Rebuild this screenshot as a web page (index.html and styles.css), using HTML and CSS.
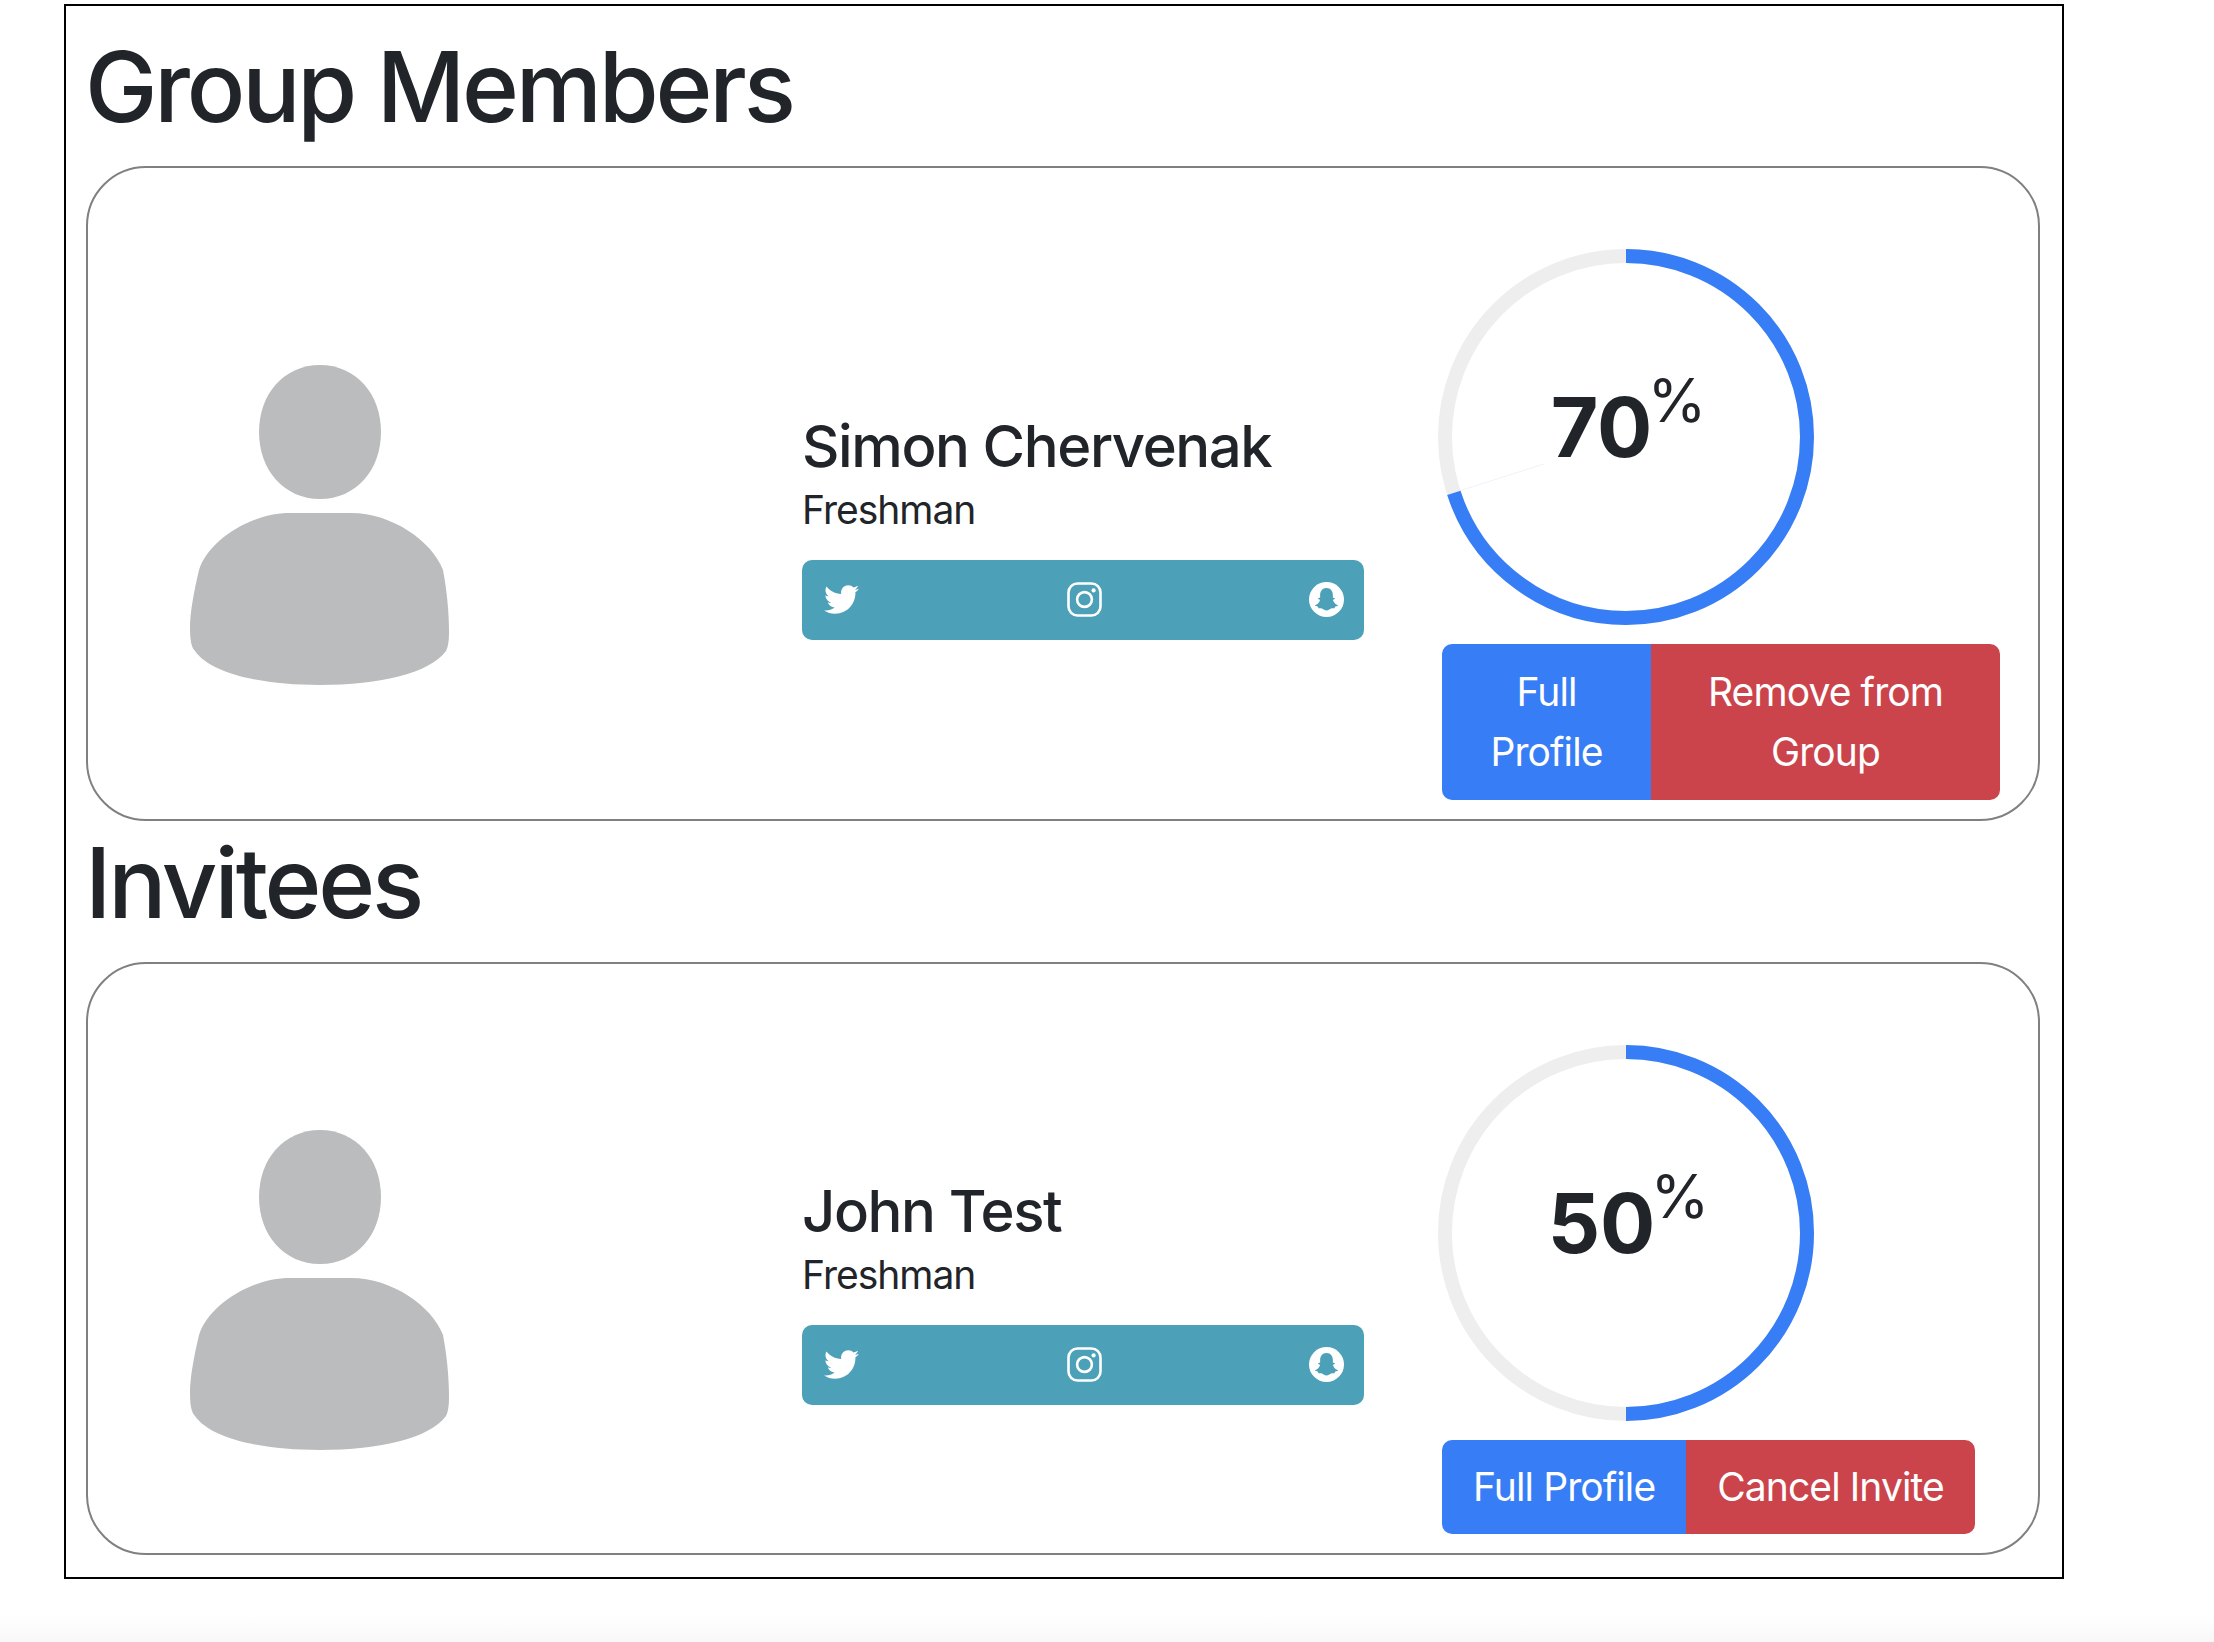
FILE: index.html
```html
<!DOCTYPE html>
<html>
<head>
    <title>Group</title>
    <link rel="stylesheet" href="styles.css">
</head>
<body>
    <svg class="icon-defs" width="0" height="0">
        <symbol id="avatar" viewBox="0 0 320 340">
            <path d="M160 14c36 0 61 29 61 67s-25 67-61 67-61-29-61-67 25-67 61-67z"/>
            <path d="M130 162H191C232 162 272 190 283 219C287 240 289 262 289 282C289 290 288 296 286 300C270 322 220 334 160 334C100 334 50 322 35 300C31 296 30 288 30 276C30 262 34 240 39 219C48 190 90 162 130 162Z"/>
        </symbol>
        <symbol id="twitter" viewBox="0 0 512 512">
            <path d="M459.37 151.716c.325 4.548.325 9.097.325 13.645 0 138.72-105.583 298.558-298.558 298.558-59.452 0-114.68-17.219-161.137-47.106 8.447.974 16.568 1.299 25.34 1.299 49.055 0 94.213-16.568 130.274-44.832-46.132-.975-84.792-31.188-98.112-72.772 6.498.974 12.995 1.624 19.818 1.624 9.421 0 18.843-1.3 27.614-3.573-48.081-9.747-84.143-51.98-84.143-102.985v-1.299c13.969 7.797 30.214 12.67 47.431 13.319-28.264-18.843-46.781-51.005-46.781-87.391 0-19.492 5.197-37.36 14.294-52.954 51.655 63.675 129.3 105.258 216.365 109.807-1.624-7.797-2.599-15.918-2.599-24.04 0-57.828 46.782-104.934 104.934-104.934 30.213 0 57.502 12.67 76.67 33.137 23.715-4.548 46.456-13.32 66.599-25.34-7.798 24.366-24.366 44.833-46.132 57.827 21.117-2.273 41.584-8.122 60.426-16.243-14.292 20.791-32.161 39.308-52.628 54.253z"/>
        </symbol>
        <symbol id="instagram" viewBox="0 0 35 35">
            <rect x="1.5" y="1.5" width="32" height="32" rx="9" fill="none" stroke="#fff" stroke-width="2.6"/>
            <circle cx="17.5" cy="17.5" r="7.4" fill="none" stroke="#fff" stroke-width="2.6"/>
            <circle cx="26.6" cy="8.4" r="2.1" fill="#fff"/>
        </symbol>
        <symbol id="snapchat" viewBox="0 0 24 24">
            <circle cx="12" cy="12" r="12" fill="#fff"/>
            <path fill="#4ca0b7" transform="translate(12 12.4) scale(1.18) translate(-12 -12)" d="M12 5c-2.5 0-3.7 2-3.7 4.1v1.5c-.5.1-1 0-1.2.3-.1.4.9.7 1.1 1 .1.5-1 2.3-2.5 2.9-.4.2-.4.5 0 .7.5.2 1.1.2 1.4.5.2.3.1.8.5.8.7 0 1.3-.1 2 .3.7.4 1.3.9 2.4.9s1.7-.5 2.4-.9c.7-.4 1.3-.3 2-.3.4 0 .3-.5.5-.8.3-.3.9-.3 1.4-.5.4-.2.4-.5 0-.7-1.5-.6-2.6-2.4-2.5-2.9.2-.3 1.2-.6 1.1-1-.2-.3-.7-.2-1.2-.3V9.1C15.7 7 14.5 5 12 5z"/>
        </symbol>
    </svg>

    <div class="group-container">
        <h1>Group Members</h1>
        <div class="member-card">
            <div class="avatar-col">
                <svg class="avatar"><use href="#avatar"/></svg>
            </div>
            <div class="info-col">
                <h4>Simon Chervenak</h4>
                <div class="year">Freshman</div>
                <div class="social-bar">
                    <svg class="social-icon twitter"><use href="#twitter"/></svg>
                    <svg class="social-icon"><use href="#instagram"/></svg>
                    <svg class="social-icon"><use href="#snapchat"/></svg>
                </div>
            </div>
            <div class="match-col">
                <div class="ring">
                    <svg viewBox="0 0 376 376">
                        <circle class="ring-track" cx="188" cy="188" r="181"/>
                        <line class="ring-seam" x1="21" y1="242" x2="106" y2="215"/>
                        <circle class="ring-value" cx="188" cy="188" r="181" pathLength="100" stroke-dasharray="70 100" transform="rotate(-90 188 188)"/>
                    </svg>
                    <div class="ring-label">70<span class="percent">%</span></div>
                </div>
                <div class="btn-group">
                    <button class="btn btn-blue btn-narrow">Full Profile</button>
                    <button class="btn btn-red btn-wide">Remove from Group</button>
                </div>
            </div>
        </div>

        <h1>Invitees</h1>
        <div class="member-card">
            <div class="avatar-col">
                <svg class="avatar"><use href="#avatar"/></svg>
            </div>
            <div class="info-col">
                <h4>John Test</h4>
                <div class="year">Freshman</div>
                <div class="social-bar">
                    <svg class="social-icon twitter"><use href="#twitter"/></svg>
                    <svg class="social-icon"><use href="#instagram"/></svg>
                    <svg class="social-icon"><use href="#snapchat"/></svg>
                </div>
            </div>
            <div class="match-col">
                <div class="ring">
                    <svg viewBox="0 0 376 376">
                        <circle class="ring-track" cx="188" cy="188" r="181"/>
                        <circle class="ring-value" cx="188" cy="188" r="181" pathLength="100" stroke-dasharray="50 100" transform="rotate(-90 188 188)"/>
                    </svg>
                    <div class="ring-label">50<span class="percent">%</span></div>
                </div>
                <div class="btn-group">
                    <button class="btn btn-blue">Full Profile</button>
                    <button class="btn btn-red">Cancel Invite</button>
                </div>
            </div>
        </div>
    </div>
</body>
</html>
```

FILE: styles.css
```css
body {
    margin: 0;
    min-height: 1642px;
    box-sizing: border-box;
    padding: 4px 0 0 64px;
    font-family: Inter, "Liberation Sans", sans-serif;
    color: #212529;
    background: linear-gradient(to bottom, #ffffff 1615px, #f8f8f8 1642px);
}
.icon-defs {
    display: block;
    height: 0;
}
.group-container {
    width: 2000px;
    box-sizing: border-box;
    border: 2px solid #000000;
    padding: 21px 22px 22px 20px;
    background-color: #ffffff;
}
h1 {
    margin: 0 0 19px -1px;
    font-size: 97px;
    line-height: 120px;
    font-weight: 500;
    letter-spacing: -3.2px;
}
.member-card {
    display: flex;
    align-items: center;
    box-sizing: border-box;
    margin-bottom: 2px;
    padding: 81px 0 19px 0;
    border: 2px solid #808080;
    border-radius: 60px;
}
.member-card:last-child {
    margin-bottom: 0;
}
.avatar-col {
    width: 714px;
    margin-bottom: 8px;
    padding-left: 72px;
    box-sizing: border-box;
}
.avatar {
    display: block;
    width: 320px;
    height: 340px;
    fill: #bbbcbe;
}
.info-col {
    width: 562px;
    margin: 0 74px 0 0;
}
h4 {
    margin: 0;
    font-size: 58px;
    line-height: 72px;
    font-weight: 500;
    letter-spacing: -1.4px;
}
.year {
    margin-top: -2px;
    font-size: 39px;
    line-height: 60px;
    letter-spacing: -1px;
}
.social-bar {
    display: flex;
    justify-content: space-between;
    align-items: center;
    height: 80px;
    margin-top: 20px;
    padding: 0 20px 0 22px;
    border-radius: 10px;
    background-color: #4ca0b7;
}
.social-icon {
    display: block;
    width: 35px;
    height: 35px;
    fill: #ffffff;
}
.match-col {
    display: flex;
    flex-direction: column;
    width: 562px;
}
.ring {
    position: relative;
    width: 376px;
    height: 376px;
    margin-bottom: 19px;
}
.ring svg {
    display: block;
    width: 376px;
    height: 376px;
}
.ring-track, .ring-value {
    fill: none;
    stroke-width: 14;
}
.ring-track {
    stroke: #eeeeee;
}
.ring-value {
    stroke: #377df6;
}
.ring-seam {
    stroke: #eef2fa;
    stroke-width: 1;
}
.ring-label {
    position: absolute;
    top: 0;
    left: 5px;
    right: 0;
    bottom: 20px;
    display: flex;
    justify-content: center;
    align-items: center;
    font-size: 82px;
    font-weight: 700;
}
.percent {
    align-self: flex-start;
    margin: 121px 0 0 -5px;
    font-size: 60px;
    line-height: 60px;
    font-weight: 400;
}
.btn-group {
    display: flex;
    margin-left: 4px;
}
.btn {
    padding: 17px 31px;
    border: none;
    font-family: inherit;
    font-size: 39px;
    line-height: 60px;
    letter-spacing: -0.9px;
    color: #ffffff;
}
.btn-blue {
    background-color: #377df6;
    border-radius: 10px 0 0 10px;
}
.btn-red {
    background-color: #cb444c;
    border-radius: 0 10px 10px 0;
}
.btn-narrow {
    width: 209px;
    padding-top: 18px;
    padding-bottom: 18px;
}
.btn-wide {
    width: 349px;
    padding-top: 18px;
    padding-bottom: 18px;
}
```
